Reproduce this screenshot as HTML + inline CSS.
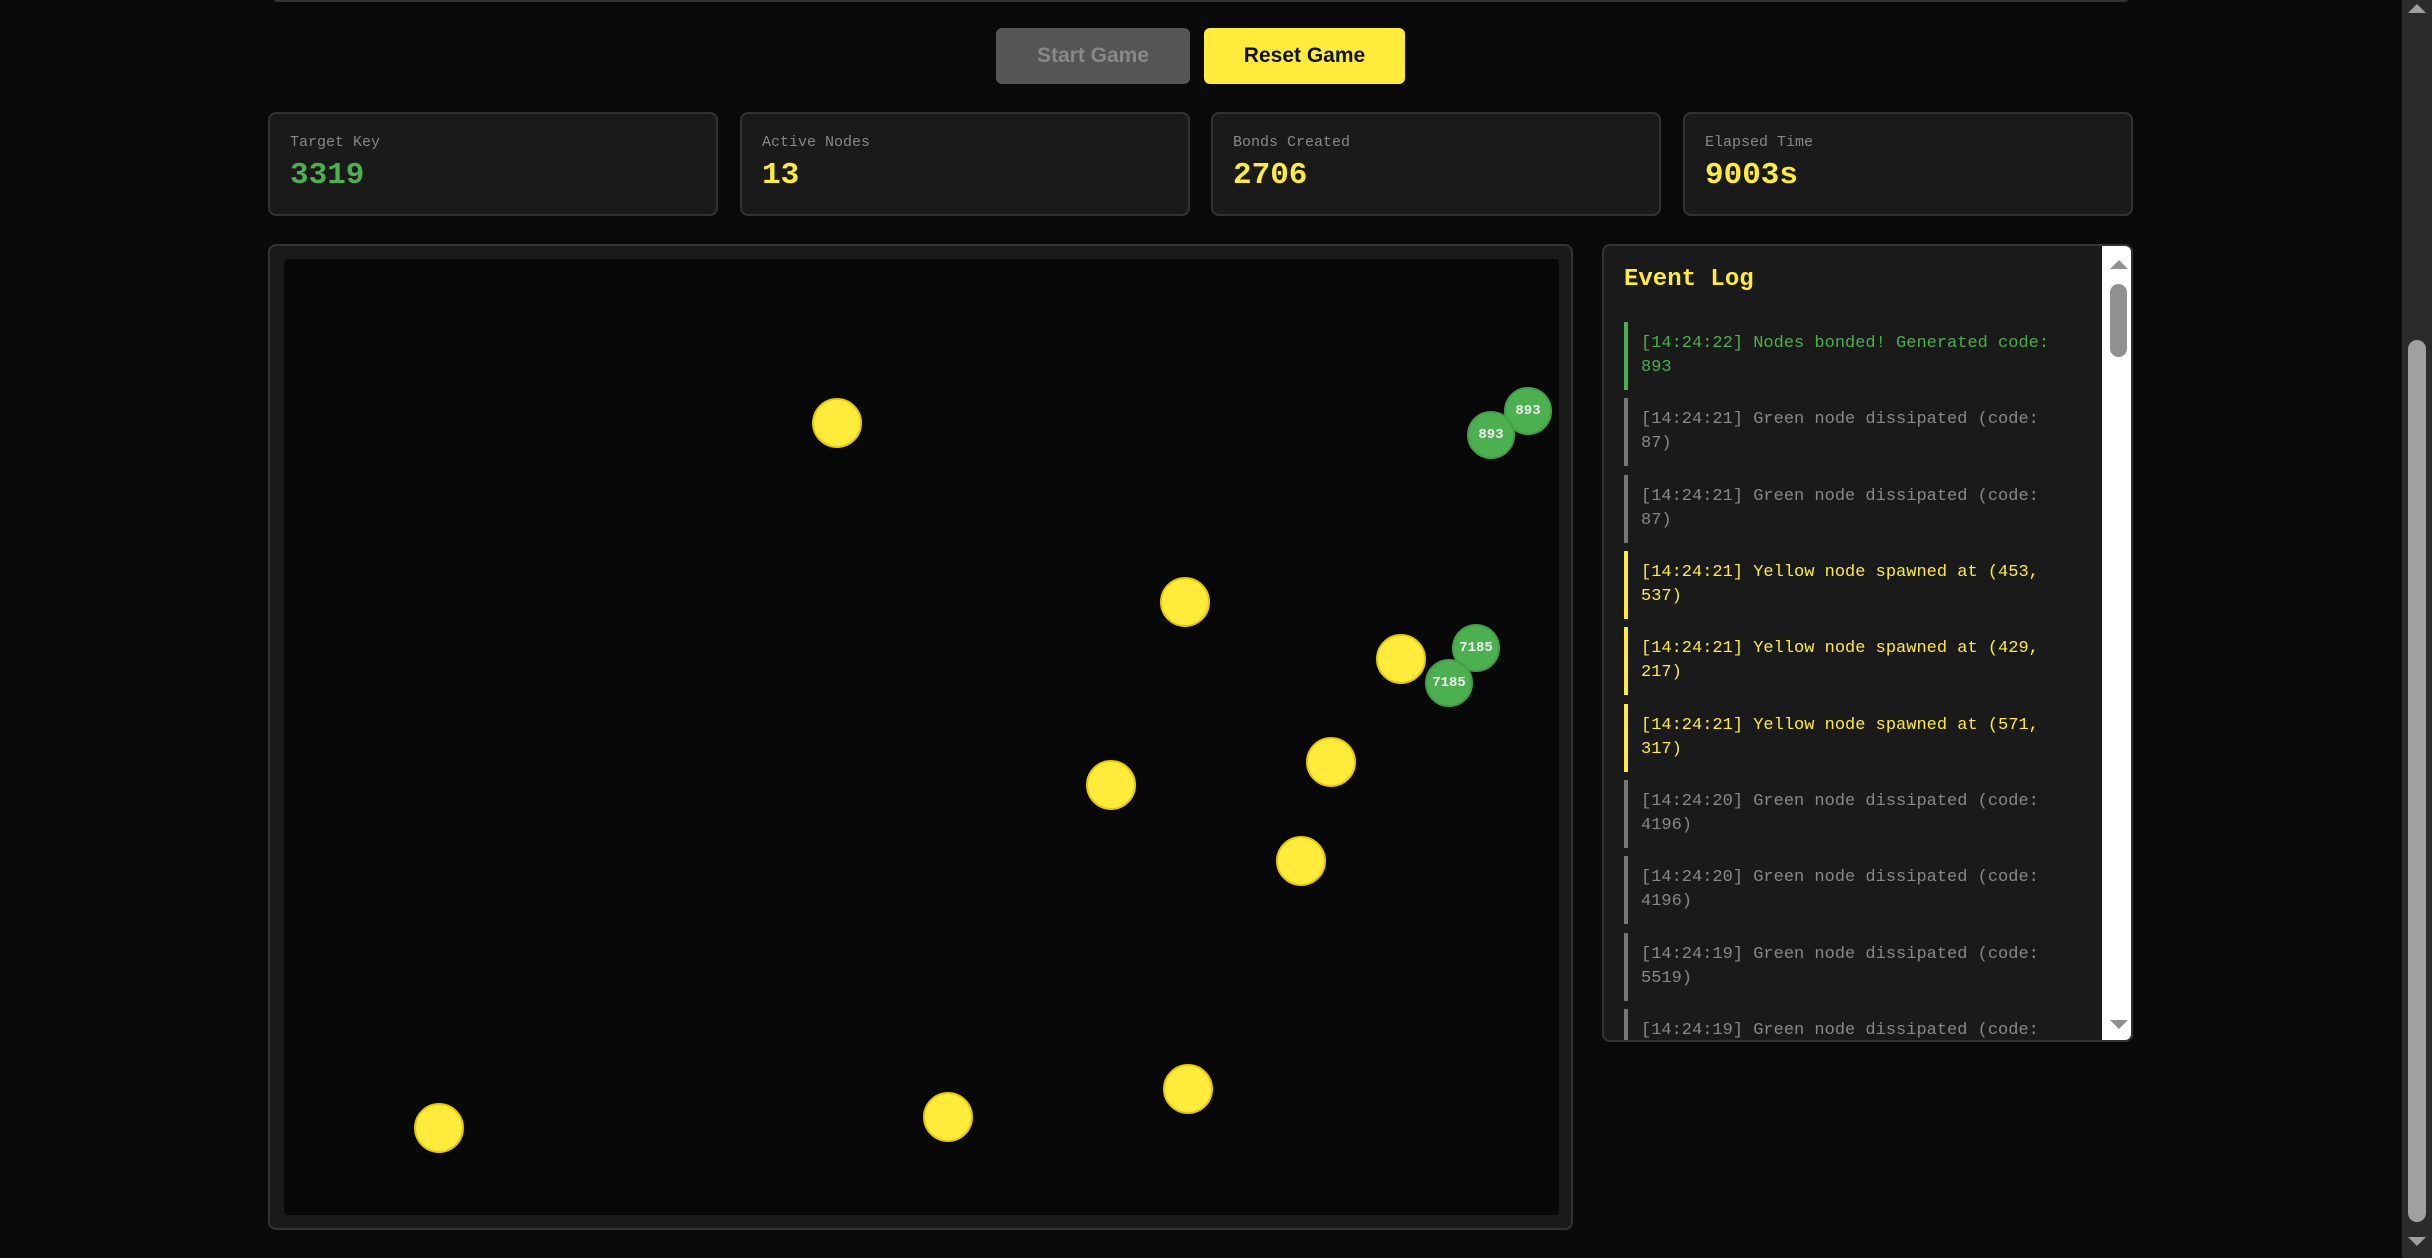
<!DOCTYPE html>
<html><head><meta charset="utf-8"><style>
*{box-sizing:border-box;margin:0;padding:0}
body{width:2432px;height:1258px;background:#0a0a0a;position:relative;overflow:hidden;font-family:"Liberation Mono",monospace}
.a{position:absolute}
.btn{position:absolute;top:28px;height:56px;border-radius:6px;font-family:"Liberation Sans",sans-serif;font-weight:bold;font-size:21px;display:flex;align-items:center;justify-content:center}
.card{position:absolute;top:112px;height:104px;width:450px;background:#1a1a1a;border:2px solid #333;border-radius:8px}
.card .l{position:absolute;left:20px;top:20px;font-size:15px;color:#888}
.card .v{position:absolute;left:20px;top:44px;font-size:31px;font-weight:bold}
.n{position:absolute;border-radius:50%}
.y{width:50px;height:50px;background:#ffeb3b;border:2px solid #e6c800}
.g{width:48px;height:48px;background:#4caf50;border:2px solid #43a047;color:#eee;font-size:14px;font-weight:bold;display:flex;align-items:center;justify-content:center}
.e{position:absolute;left:20px;width:440px;height:68px;border-left:4px solid;padding:10px 0 0 13px;font-size:17px;line-height:24px}
</style></head><body>
<div class="a" style="left:272px;top:-4px;width:1858px;height:6px;border:2px solid #333;border-top:none;border-radius:0 0 6px 6px;background:#1a1a1a"></div>
<div class="btn" style="left:996px;width:194px;background:#555;color:#888">Start Game</div>
<div class="btn" style="left:1204px;width:201px;background:#ffeb3b;color:#111">Reset Game</div>
<div class="card" style="left:268px"><div class="l">Target Key</div><div class="v" style="color:#4caf50">3319</div></div>
<div class="card" style="left:740px"><div class="l">Active Nodes</div><div class="v" style="color:#ffeb3b">13</div></div>
<div class="card" style="left:1211px"><div class="l">Bonds Created</div><div class="v" style="color:#ffeb3b">2706</div></div>
<div class="card" style="left:1683px"><div class="l">Elapsed Time</div><div class="v" style="color:#ffeb3b">9003s</div></div>
<div class="a" style="left:268px;top:244px;width:1305px;height:986px;background:#1a1a1a;border:2px solid #333;border-radius:8px"></div>
<div class="a" style="left:284px;top:259px;width:1275px;height:956px;background:#080808;border-radius:4px"></div>
<div class="n y" style="left:812px;top:398px"></div>
<div class="n y" style="left:1160px;top:577px"></div>
<div class="n y" style="left:1376px;top:634px"></div>
<div class="n y" style="left:1306px;top:737px"></div>
<div class="n y" style="left:1086px;top:760px"></div>
<div class="n y" style="left:1276px;top:836px"></div>
<div class="n y" style="left:414px;top:1103px"></div>
<div class="n y" style="left:923px;top:1092px"></div>
<div class="n y" style="left:1163px;top:1064px"></div>
<div class="n g" style="left:1504px;top:387px">893</div>
<div class="n g" style="left:1467px;top:411px">893</div>
<div class="n g" style="left:1452px;top:624px">7185</div>
<div class="n g" style="left:1425px;top:659px">7185</div>
<div class="a" style="left:1602px;top:244px;width:531px;height:798px;background:#1a1a1a;border:2px solid #333;border-radius:8px;overflow:hidden">
<div class="a" style="left:20px;top:20px;font-size:24px;font-weight:bold;color:#ffeb3b">Event Log</div>
<div class="e" style="top:76px;border-color:#4caf50;color:#4caf50">[14:24:22] Nodes bonded! Generated code: 893</div>
<div class="e" style="top:152px;border-color:#777;color:#888">[14:24:21] Green node dissipated (code: 87)</div>
<div class="e" style="top:229px;border-color:#777;color:#888">[14:24:21] Green node dissipated (code: 87)</div>
<div class="e" style="top:305px;border-color:#ffeb3b;color:#ffeb3b">[14:24:21] Yellow node spawned at (453, 537)</div>
<div class="e" style="top:381px;border-color:#ffeb3b;color:#ffeb3b">[14:24:21] Yellow node spawned at (429, 217)</div>
<div class="e" style="top:458px;border-color:#ffeb3b;color:#ffeb3b">[14:24:21] Yellow node spawned at (571, 317)</div>
<div class="e" style="top:534px;border-color:#777;color:#888">[14:24:20] Green node dissipated (code: 4196)</div>
<div class="e" style="top:610px;border-color:#777;color:#888">[14:24:20] Green node dissipated (code: 4196)</div>
<div class="e" style="top:687px;border-color:#777;color:#888">[14:24:19] Green node dissipated (code: 5519)</div>
<div class="e" style="top:763px;border-color:#777;color:#888">[14:24:19] Green node dissipated (code: 5519)</div>
<div class="a" style="left:498px;top:0;width:31px;height:798px;background:#fff"></div>
<div class="a" style="left:506px;top:14px;width:0;height:0;border-left:9px solid transparent;border-right:9px solid transparent;border-bottom:9px solid #909090"></div>
<div class="a" style="left:506px;top:38px;width:17px;height:73px;background:#909090;border-radius:9px"></div>
<div class="a" style="left:506px;top:774px;width:0;height:0;border-left:9px solid transparent;border-right:9px solid transparent;border-top:9px solid #909090"></div>
</div>
<div class="a" style="left:2402px;top:0;width:30px;height:1258px;background:#2b2b2b"></div>
<div class="a" style="left:2408px;top:4px;width:0;height:0;border-left:9px solid transparent;border-right:9px solid transparent;border-bottom:9px solid #a0a0a0"></div>
<div class="a" style="left:2408px;top:340px;width:18px;height:882px;background:#a0a0a0;border-radius:9px"></div>
<div class="a" style="left:2408px;top:1237px;width:0;height:0;border-left:9px solid transparent;border-right:9px solid transparent;border-top:9px solid #a0a0a0"></div>
</body></html>
